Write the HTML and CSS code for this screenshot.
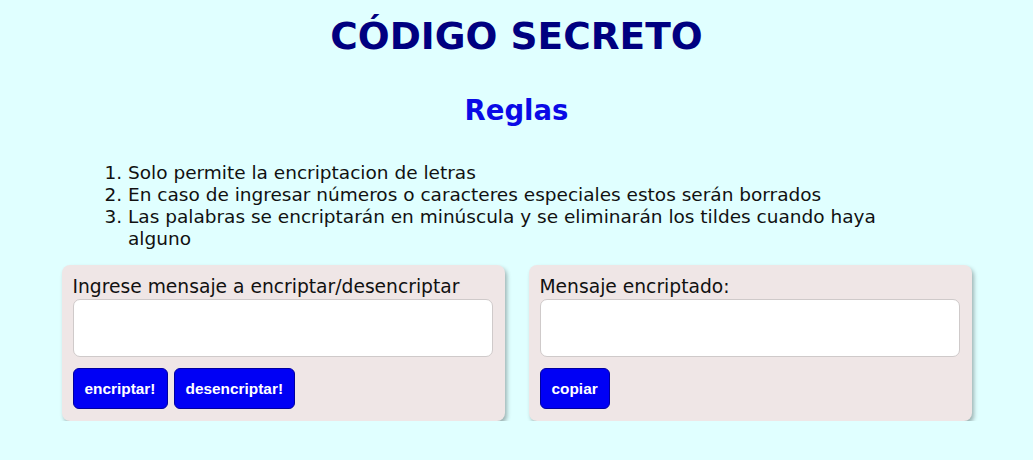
FILE: index.html
```html
<!DOCTYPE html>
<html lang="es">
<head>
<meta charset="utf-8">
<title>Código secreto</title>
<link rel="stylesheet" href="styles.css">
</head>
<body>
<header class="header">
  <h1 class="title">CÓDIGO SECRETO</h1>
  <h2 class="subtitle">Reglas</h2>
</header>
<section class="rules">
  <ol class="rules-list">
    <li>Solo permite la encriptacion de letras</li>
    <li>En caso de ingresar números o caracteres especiales estos serán borrados</li>
    <li>Las palabras se encriptarán en minúscula y se eliminarán los tildes cuando haya alguno</li>
  </ol>
</section>
<main class="panels">
  <div class="card">
    <label class="card-label" for="entrada">Ingrese mensaje a encriptar/desencriptar</label>
    <textarea class="field" id="entrada"></textarea>
    <div class="actions">
      <button class="btn">encriptar!</button>
      <button class="btn">desencriptar!</button>
    </div>
  </div>
  <div class="card">
    <label class="card-label" for="salida">Mensaje encriptado:</label>
    <textarea class="field" id="salida"></textarea>
    <div class="actions">
      <button class="btn">copiar</button>
    </div>
  </div>
</main>
</body>
</html>
```
FILE: styles.css
```css
html, body {
  margin: 0;
  padding: 0;
}
body {
  background: #e0ffff;
  font-family: "DejaVu Sans", Verdana, sans-serif;
  color: #111;
}
.header {
  text-align: center;
  padding-top: 14px;
}
.title {
  margin: 0;
  font-size: 37.5px;
  line-height: 44px;
  color: #000080;
  font-weight: bold;
}
.subtitle {
  margin: 36px 0 0;
  font-size: 27.5px;
  line-height: 32px;
  color: #0a0ae6;
}
.rules {
  margin: 36px 128px 0 88px;
}
.rules-list {
  margin: 0;
  padding-left: 40px;
  font-size: 18.5px;
  line-height: 22px;
}
.panels {
  display: flex;
  gap: 24px;
  width: 910px;
  margin: 15px auto 0;
}
.card {
  flex: 1;
  background: #efe6e6;
  border-radius: 8px;
  box-shadow: 2px 3px 4px rgba(0, 0, 0, 0.3);
  padding: 10px 12px 12px 11px;
  display: flex;
  flex-direction: column;
}
.card-label {
  font-size: 18.7px;
  line-height: 24px;
  color: #111;
}
.field {
  box-sizing: border-box;
  height: 58px;
  width: 100%;
  margin: 0;
  border: 1px solid #cfcaca;
  border-radius: 7px;
  background: #fff;
  resize: none;
  display: block;
}
.actions {
  display: flex;
  gap: 6px;
  margin-top: 11px;
}
.btn {
  height: 41px;
  padding: 0 11px;
  background: #0000f5;
  color: #fff;
  border: 1px solid #0000a0;
  border-radius: 6px;
  font-family: "Liberation Sans", Arial, sans-serif;
  font-weight: bold;
  font-size: 15.4px;
  cursor: pointer;
}
```
